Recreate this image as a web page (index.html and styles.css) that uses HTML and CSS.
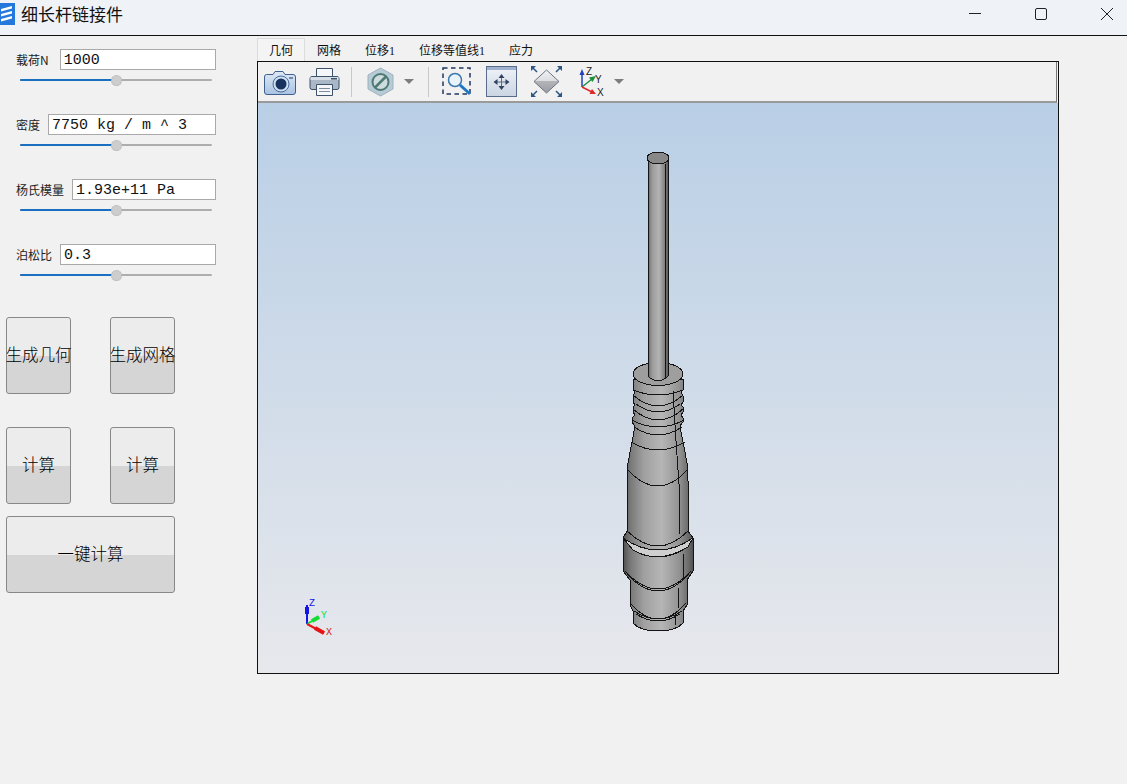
FILE: index.html
```html
<!DOCTYPE html>
<html lang="zh">
<head>
<meta charset="utf-8">
<title>细长杆链接件</title>
<link rel="stylesheet" href="styles.css">
</head>
<body>
<div class="app">
  <header class="titlebar">
    <svg class="logo" width="15" height="22" viewBox="0 0 15 22">
      <path fill="#2478dc" d="M0 0H15V22H0Z"/>
      <path fill="#fff" d="M1 6 12 3V5.500L1 8.500ZM1 11 12 8V10.500L1 13.500ZM1 16 12 13V15.500L1 18.500Z"/>
    </svg>
    <span class="title">细长杆链接件</span>
    <div class="winctrls">
      <svg width="14" height="14" viewBox="0 0 14 14"><path d="M1 6.500H13" stroke="#222" fill="none"/></svg>
      <svg width="14" height="14" viewBox="0 0 14 14"><rect x="1.500" y="1.500" width="11" height="11" rx="1.500" stroke="#222" fill="none"/></svg>
      <svg width="14" height="14" viewBox="0 0 14 14"><path d="M1 1 13 13M13 1 1 13" stroke="#222" fill="none"/></svg>
    </div>
  </header>
  <div class="content">
    <aside class="side">
      <div class="param">
        <div class="param-row"><label class="param-label param-label-load">载荷N</label><div class="field">1000</div></div>
        <div class="slider"><div class="slider-fill"></div><div class="slider-thumb"></div></div>
      </div>
      <div class="param">
        <div class="param-row"><label class="param-label">密度</label><div class="field">7750 kg / m ^ 3</div></div>
        <div class="slider"><div class="slider-fill"></div><div class="slider-thumb"></div></div>
      </div>
      <div class="param">
        <div class="param-row"><label class="param-label">杨氏模量</label><div class="field">1.93e+11 Pa</div></div>
        <div class="slider"><div class="slider-fill"></div><div class="slider-thumb"></div></div>
      </div>
      <div class="param">
        <div class="param-row"><label class="param-label">泊松比</label><div class="field">0.3</div></div>
        <div class="slider"><div class="slider-fill"></div><div class="slider-thumb"></div></div>
      </div>
      <div class="actions">
        <button class="btn">生成几何</button>
        <button class="btn">生成网格</button>
        <button class="btn btn-row2">计算</button>
        <button class="btn btn-row2">计算</button>
        <button class="btn btn-wide">一键计算</button>
      </div>
    </aside>
    <main class="main">
      <nav class="tabs">
        <div class="tab tab-active">几何</div>
        <div class="tab">网格</div>
        <div class="tab">位移1</div>
        <div class="tab">位移等值线1</div>
        <div class="tab">应力</div>
      </nav>
      <section class="frame">
        <div class="toolbar">
          <svg class="ic-camera" width="33" height="28" viewBox="0 0 33 28">
            <defs><linearGradient id="cam" x1="0" y1="0" x2="0" y2="1"><stop offset="0" stop-color="#dfe9f5"/><stop offset="1" stop-color="#a9c3e2"/></linearGradient></defs>
            <path d="M2.500 6.500H9L11 3.500H19L21 6.500H29Q31.500 6.500 31.500 9V24Q31.500 26.500 29 26.500H3Q.5 26.500 .5 24V9Q.5 6.500 2.500 6.500Z" fill="url(#cam)" stroke="#3f5f8e"/>
            <circle cx="17" cy="16" r="8" fill="#cfe0f2" stroke="#4a6a98"/>
            <circle cx="17" cy="16" r="5.500" fill="#17325f"/>
            <rect x="25" y="9" width="4" height="2" fill="#6d89ae"/>
          </svg>
          <svg class="ic-printer" width="31" height="30" viewBox="0 0 31 30">
            <path d="M7.500 10V1.500H23.500V10" fill="#f4f6f9" stroke="#3d5168"/>
            <rect x="1" y="9.500" width="29" height="13" rx="2" fill="#a9b7c6" stroke="#3d5168"/>
            <rect x="1.500" y="10" width="28" height="3" fill="#d5dde6"/>
            <rect x="22" y="11" width="6" height="1.500" fill="#3d5168"/>
            <path d="M7.500 17.500H23.500V28.500H7.500Z" fill="#f4f6f9" stroke="#3d5168"/>
            <path d="M10 21.500H21M10 24.500H21" stroke="#7c8da0"/>
          </svg>
          <div class="tool-sep tool-sep-a"></div>
          <svg class="ic-hex" width="27" height="30" viewBox="0 0 27 30">
            <path d="M13.500 1 26 8V22L13.500 29 1 22V8Z" fill="#b7cbd6" stroke="#9db2bd"/>
            <circle cx="13.500" cy="15" r="8" fill="#cfdcdf" stroke="#4d7a74" stroke-width="2"/>
            <path d="M8 20.500 19 9.500" stroke="#4d7a74" stroke-width="2.500"/>
          </svg>
          <svg class="ic-caret" width="10" height="5" viewBox="0 0 10 5"><path d="M0 0H10L5 5Z" fill="#7d7d7d"/></svg>
          <div class="tool-sep tool-sep-b"></div>
          <svg class="ic-zoom" width="30" height="29" viewBox="0 0 30 29">
            <rect x="1" y="1" width="27" height="26" fill="none" stroke="#20375f" stroke-width="1.500" stroke-dasharray="4.500 3.500"/>
            <circle cx="13" cy="13" r="6.500" fill="#eaf2fa" stroke="#3b79ad" stroke-width="1.500"/>
            <path d="M18 18 28 27" stroke="#1f77c5" stroke-width="3"/>
          </svg>
          <svg class="ic-fit" width="31" height="31" viewBox="0 0 31 31">
            <defs><linearGradient id="fit" x1="0" y1="0" x2="0" y2="1"><stop offset="0" stop-color="#f0f3f8"/><stop offset="1" stop-color="#cbd4e3"/></linearGradient></defs>
            <rect x=".5" y=".5" width="30" height="30" fill="url(#fit)" stroke="#5a6c8c"/>
            <rect x="1" y="1" width="29" height="3" fill="#9fb1cc"/>
            <path d="M15.500 11V21M10.500 16H20.500" stroke="#5a6a82"/>
            <path d="M15.500 8 12.500 12H18.500ZM15.500 24 12.500 20H18.500ZM7.500 16 11.500 13V19ZM23.500 16 19.500 13V19Z" fill="#2f4263"/>
          </svg>
          <svg class="ic-diamond" width="31" height="31" viewBox="0 0 31 31">
            <defs><linearGradient id="dia" x1="0" y1="0" x2="0" y2="1"><stop offset="0" stop-color="#f1f2f4"/><stop offset=".5" stop-color="#dadce0"/><stop offset=".5" stop-color="#b2b4b8"/><stop offset="1" stop-color="#9a9ca1"/></linearGradient></defs>
            <path d="M15.500 4 28 15.500 15.500 27 3 15.500Z" fill="url(#dia)" stroke="#6c7480"/>
            <path d="M1 1 6 6M30 1 25 6M1 30 6 25M30 30 25 25" fill="none" stroke="#2b5583" stroke-width="1.500"/>
            <path d="M0 0H5L0 5ZM31 0H26L31 5ZM0 31H5L0 26ZM31 31H26L31 26Z" fill="#2b5583"/>
          </svg>
          <svg class="ic-triad" width="30" height="31" viewBox="0 0 30 31">
            <path d="M5 21V7" stroke="#2040c0" stroke-width="1.500"/>
            <path d="M5 3 2.500 9H7.500Z" fill="#2040c0"/>
            <path d="M5 21 15 13" stroke="#1c8f3e" stroke-width="1.500"/>
            <path d="M19 10 12 11.500 15.500 16Z" fill="#1c8f3e"/>
            <path d="M5 21 15 26" stroke="#e02828" stroke-width="1.500"/>
            <path d="M19 28 12.500 28 15 23Z" fill="#e02828"/>
            <text class="triad-letter" x="9" y="9">Z</text>
            <text class="triad-letter" x="18" y="17">Y</text>
            <text class="triad-letter" x="20" y="30">X</text>
          </svg>
          <svg class="ic-caret" width="10" height="5" viewBox="0 0 10 5"><path d="M0 0H10L5 5Z" fill="#7d7d7d"/></svg>
        </div>
        <div class="viewport">
          <svg class="scene" width="800" height="571" viewBox="258 102 800 571">
            <defs>
              <linearGradient id="metal" gradientUnits="userSpaceOnUse" x1="623" y1="0" x2="693" y2="0">
                <stop offset="0" stop-color="#4f4f4f"/>
                <stop offset=".1" stop-color="#777"/>
                <stop offset=".3" stop-color="#a0a0a0"/>
                <stop offset=".55" stop-color="#b6b6b6"/>
                <stop offset=".8" stop-color="#939393"/>
                <stop offset=".95" stop-color="#666"/>
                <stop offset="1" stop-color="#505050"/>
              </linearGradient>
              <linearGradient id="shaft" gradientUnits="userSpaceOnUse" x1="648" y1="0" x2="668" y2="0">
                <stop offset="0" stop-color="#666"/>
                <stop offset=".2" stop-color="#9a9a9a"/>
                <stop offset=".55" stop-color="#b4b4b4"/>
                <stop offset=".85" stop-color="#7d7d7d"/>
                <stop offset="1" stop-color="#5c5c5c"/>
              </linearGradient>
            </defs>
            <g class="edges">
              <path fill="url(#metal)" d="M633 378V389L635 391 633 395V401L635 404 633 406V411L635 414 632 417V421L635 425 633 436 631 446 628 462 627 480V530L623 537V570L630 579V604L633 610V622Q640 630 658 630 676 630 683 622V610L687 604V579L693 570V537L688 530V480L687 462 684 446 682 436 680 425 683 421V417L681 414 683 411V406L681 404 683 401V395L681 391 683 389V378Z"/>
              <path class="band" d="M623 537Q658 561 693 537L688 546Q658 564 633 549Z"/>
              <path fill="none" d="M633 389Q658 399 683 389M634 395Q658 415 682 395M636 403Q658 419 680 403M633 408Q658 430 683 408M632 419Q658 433 684 419M634 426Q658 442 682 426M631 441Q658 457 685 441M627 468Q658 502 688 468"/>
              <path fill="none" d="M627 530Q658 560 688 530M623 537Q658 561 693 537M633 549Q658 563 683 549M625 570Q658 606 691 570M627 573Q658 607 689 573M630 602Q658 634 686 602M634 610Q658 626 682 610M636 613Q658 627 680 613"/>
              <path fill="none" d="M673 390 676 440 679 483V533M683 553V579M678 587V607M675 612V624"/>
              <ellipse cx="658" cy="373" rx="25" ry="11.500" fill="#9e9e9e"/>
              <path fill="url(#shaft)" d="M648 157V375Q658 385 668 375V157Z"/>
              <path fill="none" d="M665.500 163V378"/>
              <ellipse cx="658" cy="157" rx="11" ry="6" fill="#888"/>
            </g>
            <path class="axis-z" d="M307 623V604"/>
            <path class="axis-z-thick" d="M307 613V606"/>
            <path class="axis-y" d="M307 623 319 616"/>
            <path class="axis-y-thick" d="M312 620 319 616"/>
            <path class="axis-x" d="M307 623 324 632"/>
            <path class="axis-x-thick" d="M315 627 324 632"/>
            <text class="axis-label label-z" x="309" y="605">Z</text>
            <text class="axis-label label-y" x="321" y="617">Y</text>
            <text class="axis-label label-x" x="326" y="634">X</text>
          </svg>
        </div>
      </section>
    </main>
  </div>
</div>
</body>
</html>
```
FILE: styles.css
```css
* { box-sizing: border-box; }
html, body { margin: 0; height: 100%; }
body {
  background: #f1f1f1;
  color: #111;
  font-family: "Noto Sans CJK SC", "Liberation Sans", sans-serif;
  overflow: hidden;
}
.app { display: flex; flex-direction: column; height: 784px; }

.titlebar {
  display: flex;
  align-items: center;
  height: 36px;
  padding-bottom: 7px;
  background: #eff3f8;
  border-bottom: 1px solid #111;
  flex: none;
}
.logo { flex: none; margin-right: 6px; }
.title { font-size: 17px; line-height: 24px; color: #111; }
.winctrls { display: flex; margin-left: auto; margin-right: 13px; gap: 52px; }

.content { display: flex; flex: 1; min-height: 0; }
.side { width: 257px; flex: none; padding-top: 13px; }

.param { height: 65px; padding-left: 16px; width: 216px; }
.param-row { display: flex; align-items: center; gap: 8px; height: 21px; }
.param-label { font-size: 12px; line-height: 16px; white-space: nowrap; color: #222; }
.param-label-load { margin-right: 3px; }
.field {
  flex: 1;
  height: 21px;
  background: #fff;
  border: 1px solid #a9a9a9;
  font-family: "Liberation Mono", monospace;
  font-size: 15px;
  line-height: 21px;
  padding-left: 3px;
  white-space: pre;
  color: #111;
}
.slider {
  position: relative;
  width: 192px;
  height: 2px;
  margin: 9px 0 0 4px;
  background: #adadad;
  border-radius: 1px;
}
.slider-fill { width: 96px; height: 2px; background: #1a6fc0; border-radius: 1px; }
.slider-thumb {
  position: absolute;
  left: 91px;
  top: -4px;
  width: 11px;
  height: 11px;
  border-radius: 50%;
  background: #cdcdcd;
  border: 1px dotted #b0b0b0;
}

.actions {
  display: grid;
  grid-template-columns: 65px 65px;
  grid-template-rows: 77px 110px 89px;
  column-gap: 39px;
  margin: 8px 0 0 6px;
}
.btn {
  display: flex;
  align-items: center;
  justify-content: center;
  padding: 0 0 4px;
  border: 1px solid #888;
  border-radius: 3px;
  background: linear-gradient(#ececec 0, #ececec 51%, #d5d5d5 51%, #d5d5d5 100%);
  font-family: "Noto Sans CJK SC", sans-serif;
  font-size: 16.500px;
  font-weight: 300;
  color: #000;
  white-space: nowrap;
}
.btn-row2 { margin-top: 33px; }
.btn-wide { grid-column: 1 / 3; margin-top: 12px; }

.main { flex: none; width: 802px; padding-top: 2px; }
.tabs { display: flex; height: 23px; }
.tab {
  padding: 1px 12px 0;
  font-family: "Liberation Serif", "Noto Sans CJK SC", serif;
  font-size: 12px;
  line-height: 25px;
  color: #111;
}
.tab-active {
  background: #f4f4f4;
  border: 1px solid #dcdcdc;
  border-bottom: 0;
  padding: 0 11px;
}
.frame {
  height: 613px;
  border: 1px solid #111;
  display: flex;
  flex-direction: column;
  background: #f1f1f1;
}
.toolbar {
  display: flex;
  align-items: center;
  height: 41px;
  padding-left: 6px;
  margin-right: 1px;
  border-bottom: 2px solid #9a9a9a;
  border-right: 1px solid #777;
  flex: none;
}
.toolbar svg { display: block; flex: none; }
.ic-camera { margin-right: 12px; }
.ic-printer { margin-right: 11px; }
.tool-sep { width: 1px; height: 30px; background: #c8c8c8; flex: none; }
.tool-sep-a { margin-right: 15px; }
.ic-hex { margin-right: 10px; }
.ic-caret { margin-right: 14px; }
.tool-sep-b { margin-right: 13px; }
.ic-zoom { margin-right: 14px; }
.ic-fit { margin-right: 14px; }
.ic-diamond { margin-right: 15px; }
.ic-triad { margin-right: 7px; }
.triad-letter { font-family: "Liberation Sans", sans-serif; font-size: 10px; fill: #222; }

.viewport {
  flex: 1;
  min-height: 0;
  background: linear-gradient(#b9cfe6 0, #e7e8ec 100%);
}
.scene { display: block; }
.edges path, .edges ellipse { stroke: #141414; stroke-width: 1; shape-rendering: crispEdges; }
.band { fill: #cfcfcf; }
.axis-z, .axis-y, .axis-x { stroke-width: 2; fill: none; }
.axis-z-thick, .axis-y-thick, .axis-x-thick { stroke-width: 4; fill: none; }
.axis-z, .axis-z-thick { stroke: #1414e6; }
.axis-y, .axis-y-thick { stroke: #14dc32; }
.axis-x, .axis-x-thick { stroke: #e61414; }
.axis-label { font-family: "Liberation Mono", monospace; font-size: 10px; }
.label-z { fill: #1414e6; }
.label-y { fill: #14dc32; }
.label-x { fill: #d81414; }
```
